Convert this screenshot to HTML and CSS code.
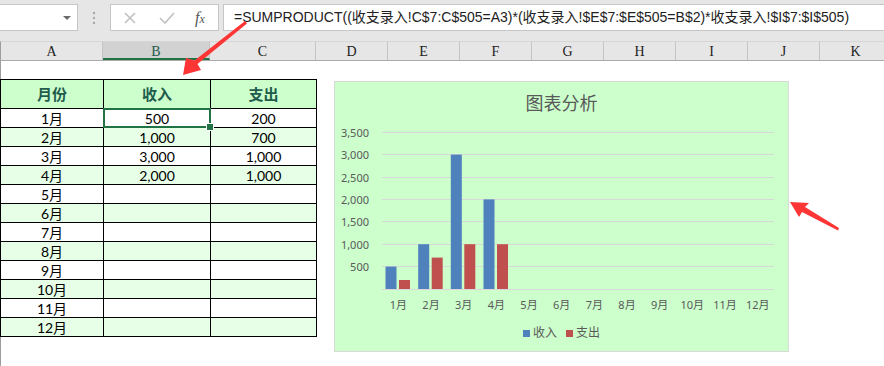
FILE: index.html
```html
<!DOCTYPE html>
<html lang="zh-CN">
<head>
  <meta charset="UTF-8" />
  <title>收支图表分析</title>
  <link rel="stylesheet" href="styles.css">
</head>
<body>
  <div class="formula-bar">
    <div class="name-box"><span class="drop"></span></div>
    <svg class="grip" width="4" height="14" viewBox="0 0 4 14">
      <circle cx="2" cy="2" r="1.2"/><circle cx="2" cy="7" r="1.2"/><circle cx="2" cy="12" r="1.2"/>
    </svg>
    <div class="fn-buttons">
      <svg class="fn-icon" width="14" height="12" viewBox="0 0 14 12">
        <path d="M2 1 L12 11 M12 1 L2 11" />
      </svg>
      <svg class="fn-icon" width="16" height="12" viewBox="0 0 16 12">
        <path d="M1 6 L6 11 L15 1" />
      </svg>
      <span class="fx">f<span>x</span></span>
    </div>
    <div class="formula">=SUMPRODUCT((收支录入!C$7:C$505=A3)*(收支录入!$E$7:$E$505=B$2)*收支录入!$I$7:$I$505)</div>
  </div>

  <div class="col-headers">
    <div class="col col-a">A</div>
    <div class="col col-b active">B</div>
    <div class="col col-c">C</div>
    <div class="col">D</div>
    <div class="col">E</div>
    <div class="col">F</div>
    <div class="col">G</div>
    <div class="col">H</div>
    <div class="col">I</div>
    <div class="col">J</div>
    <div class="col">K</div>
  </div>

  <div class="sheet">
    <table class="data">
      <colgroup><col class="c-a"><col class="c-b"><col class="c-c"></colgroup>
      <tr class="head"><th>月份</th><th>收入</th><th>支出</th></tr>
      <tr><td>1月</td><td class="selected">500</td><td>200</td></tr>
      <tr class="alt"><td>2月</td><td>1,000</td><td>700</td></tr>
      <tr><td>3月</td><td>3,000</td><td>1,000</td></tr>
      <tr class="alt"><td>4月</td><td>2,000</td><td>1,000</td></tr>
      <tr><td>5月</td><td></td><td></td></tr>
      <tr class="alt"><td>6月</td><td></td><td></td></tr>
      <tr><td>7月</td><td></td><td></td></tr>
      <tr class="alt"><td>8月</td><td></td><td></td></tr>
      <tr><td>9月</td><td></td><td></td></tr>
      <tr class="alt"><td>10月</td><td></td><td></td></tr>
      <tr><td>11月</td><td></td><td></td></tr>
      <tr class="alt"><td>12月</td><td></td><td></td></tr>
    </table>

    <div class="chart">
      <div class="chart-title">图表分析</div>
      <svg class="plot" width="453" height="192" viewBox="0 0 453 192">
        <g class="grid">
          <line x1="47" x2="439" y1="8.5" y2="8.5"/>
          <line x1="47" x2="439" y1="30.5" y2="30.5"/>
          <line x1="47" x2="439" y1="53.5" y2="53.5"/>
          <line x1="47" x2="439" y1="75.5" y2="75.5"/>
          <line x1="47" x2="439" y1="97.5" y2="97.5"/>
          <line x1="47" x2="439" y1="120.5" y2="120.5"/>
          <line x1="47" x2="439" y1="142.5" y2="142.5"/>
          <line x1="47" x2="439" y1="165.5" y2="165.5"/>
        </g>
        <g class="y-labels">
          <text x="34" y="12.5">3,500</text>
          <text x="34" y="34.5">3,000</text>
          <text x="34" y="57.5">2,500</text>
          <text x="34" y="79.5">2,000</text>
          <text x="34" y="101.5">1,500</text>
          <text x="34" y="124.5">1,000</text>
          <text x="34" y="146.5">500</text>
        </g>
        <g class="bars-in">
          <rect x="50.5" y="142.6" width="11" height="22.4"/>
          <rect x="83.2" y="120.2" width="11" height="44.8"/>
          <rect x="115.8" y="30.6" width="11" height="134.4"/>
          <rect x="148.5" y="75.4" width="11" height="89.6"/>
        </g>
        <g class="bars-out">
          <rect x="64" y="156" width="11" height="9"/>
          <rect x="96.7" y="133.6" width="11" height="31.4"/>
          <rect x="129.3" y="120.2" width="11" height="44.8"/>
          <rect x="162" y="120.2" width="11" height="44.8"/>
        </g>
        <g class="x-labels">
          <text x="63.3" y="185">1月</text>
          <text x="96" y="185">2月</text>
          <text x="128.7" y="185">3月</text>
          <text x="161.3" y="185">4月</text>
          <text x="194" y="185">5月</text>
          <text x="226.7" y="185">6月</text>
          <text x="259.3" y="185">7月</text>
          <text x="292" y="185">8月</text>
          <text x="324.7" y="185">9月</text>
          <text x="357.3" y="185">10月</text>
          <text x="390" y="185">11月</text>
          <text x="422.7" y="185">12月</text>
        </g>
      </svg>
      <div class="legend">
        <span class="key"><i class="swatch in"></i>收入</span>
        <span class="key"><i class="swatch out"></i>支出</span>
      </div>
    </div>
  </div>

  <!-- callout arrows drawn over the sheet -->
  <svg class="arrows" width="884" height="366" viewBox="0 0 884 366">
    <polygon points="183,75 186,58 194.5,60.5 245,21 247,23.5 197.5,64 201,70"/>
    <polygon points="790,202 809,203 805,207 839,228 838,230.5 802,212 799,217"/>
  </svg>
</body>
</html>
```

FILE: styles.css
```css
* { margin: 0; padding: 0; box-sizing: border-box; }
html, body { width: 884px; height: 366px; overflow: hidden; }
body {
  position: relative;
  background: #fff;
  font-family: 'Lato', 'Noto Sans CJK SC', sans-serif;
  color: #000;
}

/* Formula bar */
.formula-bar {
  height: 41px;
  background: #e6e6e6;
  display: flex;
  align-items: flex-start;
  padding-top: 4px;
}
.name-box {
  width: 79px;
  height: 27px;
  margin-left: -1px;
  background: #fff;
  border: 1px solid #c6c6c6;
  position: relative;
}
.name-box .drop {
  position: absolute;
  right: 6px; top: 11px;
  border-left: 4px solid transparent;
  border-right: 4px solid transparent;
  border-top: 4px solid #6a6a6a;
}
.grip {
  fill: #a8a8a8;
  margin: 7px 14px 0 14px;
}
.fn-buttons {
  width: 109px;
  height: 27px;
  background: #fff;
  border: 1px solid #c6c6c6;
  display: flex;
  align-items: center;
  padding-left: 12px;
  gap: 22px;
}
.fn-icon { fill: none; stroke: #c0c0c0; stroke-width: 1.6; }
.fx {
  font-family: 'Liberation Serif', serif;
  font-style: italic;
  font-size: 16px;
  color: #555;
  margin-left: -2px;
}
.fx span { font-size: 12px; }
.formula {
  flex: 1;
  margin-left: 4px;
  height: 27px;
  background: #fff;
  border: 1px solid #c6c6c6;
  border-right: none;
  padding-left: 10px;
  font-family: 'Liberation Sans', 'Noto Sans CJK SC', sans-serif;
  font-size: 14px;
  line-height: 25px;
  white-space: nowrap;
  overflow: hidden;
  color: #222;
}

/* Column headers */
.col-headers {
  display: flex;
  height: 20px;
  background: #e6e6e6;
  border-top: 1px solid #d6d6d6;
  border-bottom: 1px solid #ababab;
  border-left: 1px solid #9e9e9e;
}
.col {
  flex: 0 0 72px;
  border-right: 1px solid #c4c4c4;
  text-align: center;
  font-family: 'Liberation Serif', serif;
  font-size: 14px;
  line-height: 19px;
  color: #222;
}
.col-a { flex-basis: 102px; }
.col-b { flex-basis: 107px; }
.col-c { flex-basis: 106px; }
.col.active {
  background: #d2d2d2;
  border-bottom: 2px solid #217346;
  color: #1f5a4c;
}

/* Sheet */
.sheet {
  display: flex;
  align-items: flex-start;
  height: 305px;
  border-left: 1px solid #9e9e9e;
}
.data {
  border-collapse: collapse;
  margin-top: 18px;
  margin-left: -1px;
  font-size: 14px;
}
.c-a { width: 103px; }
.c-b { width: 107px; }
.c-c { width: 106px; }
.data th, .data td {
  border: 1px solid #000;
  text-align: center;
  padding: 0;
  height: 19px;
  line-height: 17px;
}
.data .head th {
  height: 29px;
  background: #ccffcc;
  color: #1f5c4c;
  font-size: 15px;
  font-weight: bold;
}
.data tr.alt td { background: #e6ffe6; }
.data td.selected { position: relative; }
.data td.selected::after {
  content: '';
  position: absolute;
  left: -1px; top: -1px; right: -1px; bottom: -1px;
  border: 2px solid #217346;
}
.data td.selected::before {
  content: '';
  position: absolute;
  right: -4px; bottom: -4px;
  width: 6px; height: 6px;
  background: #217346;
  border: 1px solid #fff;
  z-index: 1;
}

/* Chart */
.chart {
  width: 455px;
  height: 271px;
  margin: 20px 0 0 17px;
  background: #ccffcc;
  border: 1px solid #d9d9d9;
  font-family: 'Noto Sans', 'Noto Sans CJK SC', sans-serif;
  color: #595959;
}
.chart-title {
  height: 42px;
  line-height: 42px;
  text-align: center;
  font-size: 18px;
}
.plot { display: block; }
.grid line { stroke: #d9d9d9; stroke-width: 1; }
.y-labels text { font-size: 11px; fill: #595959; text-anchor: end; }
.x-labels text { font-size: 11px; fill: #595959; text-anchor: middle; }
.bars-in rect { fill: #4f81bd; }
.bars-out rect { fill: #c0504d; }
.legend {
  display: flex;
  justify-content: center;
  gap: 9px;
  margin-top: 9px;
  font-size: 12px;
  line-height: 16px;
}
.key { display: flex; align-items: center; gap: 3px; }
.swatch { display: block; width: 7px; height: 7px; }
.swatch.in { background: #4f81bd; }
.swatch.out { background: #c0504d; }

/* Callout arrows */
.arrows {
  position: absolute;
  top: 0; left: 0;
  pointer-events: none;
  fill: #fd3535;
}
```
